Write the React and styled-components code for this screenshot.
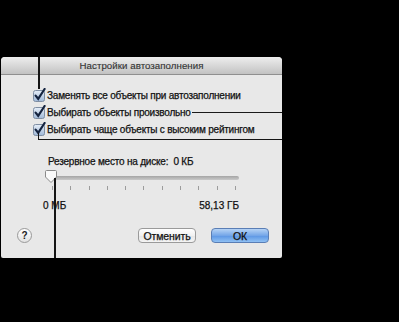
import styled, { createGlobalStyle } from 'styled-components';

const Global = createGlobalStyle`
  html, body {
    margin: 0;
    padding: 0;
    background: #000;
  }
`;

const CHECKS = [
  { label: 'Заменять все объекты при автозаполнении' },
  { label: 'Выбирать объекты произвольно', callout: true },
  { label: 'Выбирать чаще объекты с высоким рейтингом' },
];

function CheckIcon() {
  return (
    <CheckSvg width="13" height="14" viewBox="0 0 13 14">
      <defs>
        <linearGradient id="cb" x1="0" y1="0" x2="0" y2="1">
          <stop offset="0" stopColor="#e6eef8" />
          <stop offset="1" stopColor="#9fb8d8" />
        </linearGradient>
      </defs>
      <rect x="0.5" y="2.5" width="11" height="11" rx="2" fill="url(#cb)" stroke="#7f8ea3" />
      <path d="M2.6 7.6 L5.2 10.8 L11.6 1" fill="none" stroke="#14233f" strokeWidth="2.2" strokeLinecap="round" />
    </CheckSvg>
  );
}

function App() {
  const ticks = Array.from({ length: 11 });

  return (
    <Page>
      <Global />
      <Dialog>
        <TitleBar>Настройки автозаполнения</TitleBar>

        <Body>
          <CheckList>
            {CHECKS.map((c) => (
              <CheckRow key={c.label}>
                <CheckIcon />
                <CheckLabel>{c.label}</CheckLabel>
                {c.callout && <CalloutLine />}
              </CheckRow>
            ))}
          </CheckList>

          <SliderBlock>
            <SliderLabel>Резервное место на диске:&nbsp;&nbsp;0 КБ</SliderLabel>
            <Track>
              <Thumb>
                <svg width="12" height="13" viewBox="0 0 12 13">
                  <path
                    d="M1.5 0.5 H10.5 Q11.5 0.5 11.5 1.5 V7 L6 12.5 L0.5 7 V1.5 Q0.5 0.5 1.5 0.5 Z"
                    fill="#fafafa"
                    stroke="#8a8a8a"
                  />
                </svg>
              </Thumb>
            </Track>
            <Ticks>
              {ticks.map((_, i) => (
                <Tick key={i} />
              ))}
            </Ticks>
            <RangeLabels>
              <span>0 МБ</span>
              <span>58,13 ГБ</span>
            </RangeLabels>
          </SliderBlock>

          <Footer>
            <HelpButton>?</HelpButton>
            <Buttons>
              <Button>Отменить</Button>
              <Button $primary>ОК</Button>
            </Buttons>
          </Footer>
        </Body>

        {/* callout lines drawn over the dialog */}
        <VLine style={{ left: 37, top: 0, height: 32 }} />
        <Bracket />
        <VLine style={{ left: 53, top: 121, height: 80 }} />
      </Dialog>
    </Page>
  );
}

const Page = styled.div`
  width: 399px;
  height: 322px;
  box-sizing: border-box;
  padding: 57px 0 0 1px;
  background: #000;
  font-family: 'Liberation Sans', Arial, sans-serif;
`;

const Dialog = styled.div`
  position: relative;
  display: flex;
  flex-direction: column;

  width: 281px;
  height: 201px;
  box-sizing: border-box;

  border-radius: 4px 4px 2px 2px;
  background: #e8e8e8;
`;

const TitleBar = styled.div`
  height: 17px;
  flex-shrink: 0;
  display: flex;
  align-items: center;
  justify-content: center;

  border-radius: 4px 4px 0 0;
  border-bottom: 1px solid #8f8f8f;
  background: linear-gradient(#eeeeee, #c2c2c2);

  color: #353535;
  font-size: 9.7px;
  letter-spacing: 0.05px;
  -webkit-text-stroke: 0.15px #353535;
`;

const Body = styled.div`
  flex: 1;
  display: flex;
  flex-direction: column;
  padding: 13px 0 0 32px;
`;

const CheckList = styled.div`
  display: flex;
  flex-direction: column;
  gap: 3px;
`;

const CheckRow = styled.div`
  display: flex;
  align-items: center;
  height: 14px;
  gap: 1px;
`;

const CheckSvg = styled.svg`
  flex-shrink: 0;
`;

const CheckLabel = styled.span`
  color: #111;
  font-size: 10px;
  letter-spacing: -0.22px;
  white-space: nowrap;
  -webkit-text-stroke: 0.25px #111;
`;

const CalloutLine = styled.div`
  flex: 1;
  height: 0;
  margin-top: 1px;
  border-top: 1.5px solid #1a1a1a;
`;

const SliderBlock = styled.div`
  display: flex;
  flex-direction: column;
  padding: 20px 0 0 15px;
  width: 191px;
`;

const SliderLabel = styled.div`
  color: #111;
  font-size: 10px;
  letter-spacing: -0.2px;
  white-space: nowrap;
  -webkit-text-stroke: 0.25px #111;
`;

const Track = styled.div`
  position: relative;
  margin-top: 9px;
  height: 4px;
  border-radius: 2px;
  background: linear-gradient(#a5a5a5, #c9c9c9);
`;

const Thumb = styled.div`
  position: absolute;
  left: -3px;
  top: -6px;
  display: flex;
`;

const Ticks = styled.div`
  display: flex;
  justify-content: space-between;
  margin-top: 6px;
  padding: 0 3px 0 4px;
`;

const Tick = styled.div`
  width: 1px;
  height: 4px;
  background: #9c9c9c;
`;

const RangeLabels = styled.div`
  display: flex;
  justify-content: space-between;
  margin-top: 10px;
  margin-left: -5px;

  color: #111;
  font-size: 10px;
  -webkit-text-stroke: 0.25px #111;
`;

const Footer = styled.div`
  display: flex;
  align-items: center;
  justify-content: space-between;
  margin: 17px 13px 0 -16px;
`;

const HelpButton = styled.div`
  width: 15px;
  height: 15px;
  display: flex;
  align-items: center;
  justify-content: center;

  border-radius: 50%;
  border: 1px solid #9a9a9a;
  background: linear-gradient(#ffffff, #e2e2e2);
  box-sizing: border-box;

  color: #222;
  font-size: 10px;
  font-weight: bold;
`;

const Buttons = styled.div`
  display: flex;
  gap: 15px;
`;

const Button = styled.div`
  width: 58px;
  height: 15px;
  box-sizing: border-box;
  display: flex;
  align-items: center;
  justify-content: center;

  border-radius: 4px;
  border: 1px solid ${(p) => (p.$primary ? '#5a7eb5' : '#9a9a9a')};
  background: ${(p) =>
    p.$primary
      ? 'linear-gradient(#b6d3f5, #74a6e8 50%, #5b95e4 51%, #8fc0f3)'
      : 'linear-gradient(#ffffff, #f1f1f1 50%, #e6e6e6 51%, #f4f4f4)'};

  color: #111;
  font-size: 10.5px;
  letter-spacing: -0.1px;
  -webkit-text-stroke: 0.25px #111;
`;

const VLine = styled.div`
  position: absolute;
  width: 1.5px;
  background: #151515;
`;

const Bracket = styled.div`
  position: absolute;
  left: 37px;
  top: 76px;
  right: 0;
  height: 6px;
  border-left: 1.5px solid #151515;
  border-bottom: 1.5px solid #151515;
`;

export default App;
